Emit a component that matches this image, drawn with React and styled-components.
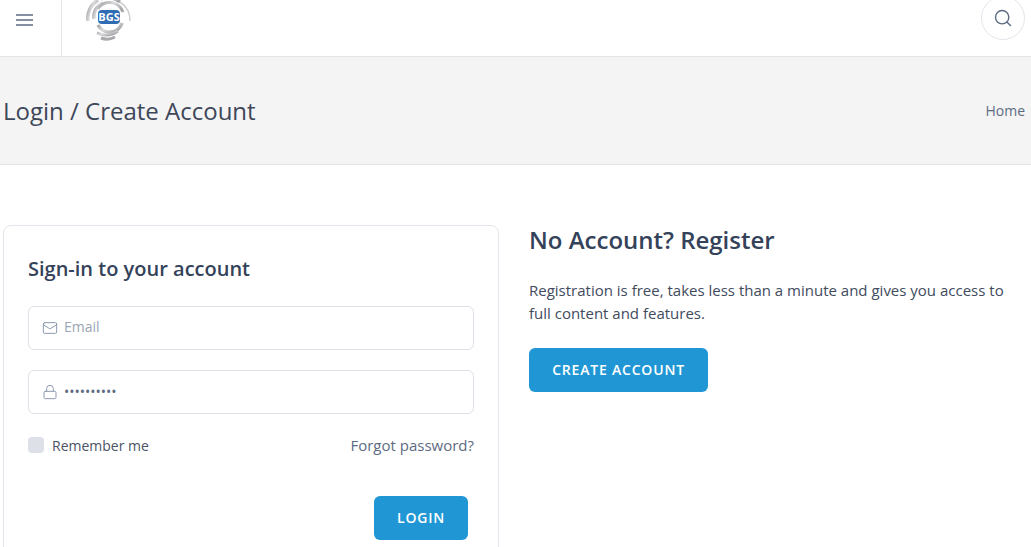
import styled, { createGlobalStyle } from "styled-components";
import { Search, Mail, Lock } from "lucide-react";

const GlobalStyle = createGlobalStyle`
  html, body {
    margin: 0;
    padding: 0;
    height: 547px;
    overflow: hidden;
    background: #fff;
    font-family: "Open Sans", "Liberation Sans", sans-serif;
    color: #3a4354;
  }
  * {
    box-sizing: border-box;
  }
`;

function Logo() {
  return (
    <LogoBox>
      <svg width="46" height="42" viewBox="0 0 46 42" fill="none">
        <defs>
          <linearGradient id="ring" x1="0" y1="0" x2="1" y2="0.6">
            <stop offset="0" stopColor="#98989c" />
            <stop offset="0.5" stopColor="#dcdcde" />
            <stop offset="1" stopColor="#a6a6aa" />
          </linearGradient>
        </defs>
        <path d="M2 21 A21 21 0 0 1 12 0" stroke="url(#ring)" strokeWidth="3.5" />
        <path d="M8 19 A15 15 0 0 1 17 3" stroke="url(#ring)" strokeWidth="3.5" />
        <path d="M15 -1 A22 22 0 0 1 34 2" stroke="url(#ring)" strokeWidth="3" />
        <path d="M34 2 A22 22 0 0 1 44 21" stroke="#d0d0d3" strokeWidth="1.5" />
        <path d="M12 9 A14 14 0 0 1 37 12" stroke="url(#ring)" strokeWidth="3" />
        <path d="M12 25 A13 13 0 0 0 36 23" stroke="url(#ring)" strokeWidth="3.5" />
        <path d="M11 33 Q22 38 32 31" stroke="url(#ring)" strokeWidth="3" />
        <path d="M15 38 Q22 41 29 37" stroke="#a9a9ad" strokeWidth="3" />
      </svg>
      <LogoText>BGS</LogoText>
    </LogoBox>
  );
}

export default function App() {
  return (
    <>
      <GlobalStyle />
      <Header>
        <MenuCell>
          <svg width="17" height="12" viewBox="0 0 17 12" fill="none">
            <path d="M0 1h17M0 6h17M0 11h17" stroke="#5d6b82" strokeWidth="1.6" />
          </svg>
        </MenuCell>
        <Logo />
        <SearchButton>
          <Search size={20} strokeWidth={1.7} color="#5d6b82" />
        </SearchButton>
      </Header>

      <Banner>
        <PageTitle>Login / Create Account</PageTitle>
        <Crumb>Home</Crumb>
      </Banner>

      <Content>
        <Card>
          <CardTitle>Sign-in to your account</CardTitle>
          <Field>
            <Mail size={16} strokeWidth={1.5} color="#8c9ab0" />
            <Placeholder>Email</Placeholder>
          </Field>
          <Field>
            <Lock size={16} strokeWidth={1.5} color="#8c9ab0" />
            <Dots>••••••••••</Dots>
          </Field>
          <OptionsRow>
            <Remember>
              <Checkbox />
              Remember me
            </Remember>
            <Forgot>Forgot password?</Forgot>
          </OptionsRow>
          <LoginRow>
            <LoginButton>LOGIN</LoginButton>
          </LoginRow>
        </Card>

        <Register>
          <RegisterTitle>No Account? Register</RegisterTitle>
          <RegisterText>
            Registration is free, takes less than a minute and gives you access to full content and
            features.
          </RegisterText>
          <CreateButton>CREATE ACCOUNT</CreateButton>
        </Register>
      </Content>
    </>
  );
}

const Header = styled.header`
  height: 57px;
  display: flex;
  align-items: flex-start;
  background: #fff;
  border-bottom: 1px solid #e2e4e8;
  padding-right: 6px;
`;

const MenuCell = styled.div`
  width: 62px;
  height: 100%;
  padding: 14px 12px 0 0;
  display: flex;
  align-items: flex-start;
  justify-content: center;
  border-right: 1px solid #e2e4e8;
`;

const LogoBox = styled.div`
  position: relative;
  width: 46px;
  height: 56px;
  margin-left: 24px;
  overflow: hidden;

  svg {
    display: block;
  }
`;

const LogoText = styled.span`
  position: absolute;
  left: 12px;
  top: 10px;
  width: 22px;
  height: 14px;
  border-radius: 4px;
  background: #2f6cb3;
  color: #fff;
  font-size: 11px;
  line-height: 14px;
  font-weight: 700;
  text-align: center;
`;

const SearchButton = styled.div`
  width: 44px;
  height: 44px;
  margin-left: auto;
  margin-top: -4px;
  border-radius: 50%;
  border: 1px solid #e2e6ec;
  display: flex;
  align-items: center;
  justify-content: center;
`;

const Banner = styled.section`
  height: 108px;
  display: flex;
  align-items: center;
  justify-content: space-between;
  padding: 0 6px 0 3px;
  background: #f4f4f4;
  border-bottom: 1px solid #e2e4e8;
`;

const PageTitle = styled.h1`
  margin: 0;
  font-size: 24px;
  font-weight: 400;
  line-height: 32px;
  color: #3d4759;
`;

const Crumb = styled.span`
  font-size: 14px;
  color: #5d6b82;
`;

const Content = styled.main`
  display: flex;
  align-items: flex-start;
  gap: 30px;
  padding: 60px 0 0 3px;
`;

const Card = styled.div`
  width: 496px;
  height: 340px;
  flex-shrink: 0;
  padding: 28px 24px 0;
  border: 1px solid #e2e6ec;
  border-radius: 8px;
  background: #fff;
`;

const CardTitle = styled.h2`
  margin: 0 0 22px;
  font-size: 20px;
  line-height: 30px;
  font-weight: 600;
  color: #34425a;
`;

const Field = styled.div`
  height: 44px;
  margin-bottom: 20px;
  padding: 0 13px;
  display: flex;
  align-items: center;
  gap: 6px;
  border: 1px solid #dde2e9;
  border-radius: 6px;
`;

const Placeholder = styled.span`
  font-size: 14px;
  color: #9aa5b5;
  margin-top: -3px;
`;

const Dots = styled.span`
  font-size: 14px;
  letter-spacing: 0;
  color: #5d6b82;
  margin-top: -2px;
`;

const OptionsRow = styled.div`
  display: flex;
  align-items: center;
  justify-content: space-between;
  margin-top: 21px;
  height: 20px;
`;

const Remember = styled.label`
  display: flex;
  align-items: center;
  gap: 8px;
  font-size: 14px;
  color: #4a5365;
`;

const Checkbox = styled.span`
  width: 16px;
  height: 16px;
  border-radius: 4px;
  background: #dde1e7;
`;

const Forgot = styled.a`
  font-size: 15px;
  color: #5d6b82;
`;

const LoginRow = styled.div`
  display: flex;
  justify-content: flex-end;
  margin-top: 41px;
  padding-right: 6px;
`;

const BlueButton = styled.button`
  height: 44px;
  padding: 0 0 2px;
  border: none;
  border-radius: 6px;
  background: #2097d4;
  color: #fff;
  font-family: inherit;
  font-size: 14px;
  font-weight: 600;
  letter-spacing: 0.8px;
`;

const LoginButton = styled(BlueButton)`
  width: 94px;
`;

const CreateButton = styled(BlueButton)`
  width: 179px;
`;

const Register = styled.div`
  flex: 1;
  padding-right: 20px;
`;

const RegisterTitle = styled.h2`
  margin: -1px 0 23px;
  font-size: 24px;
  line-height: 32px;
  font-weight: 600;
  color: #34425a;
`;

const RegisterText = styled.p`
  margin: 0 0 23px;
  font-size: 15px;
  line-height: 23px;
  color: #414b5d;
`;
